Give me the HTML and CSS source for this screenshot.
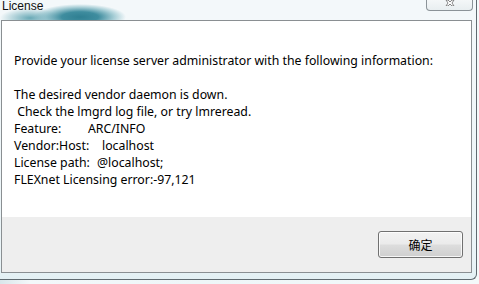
FILE: index.html
```html
<!DOCTYPE html>
<html>
<head>
<meta charset="utf-8">
<link rel="stylesheet" href="styles.css">
</head>
<body>
<div class="window">
  <div class="titlebar">
    <span class="title">License</span>
    <div class="close">
      <svg width="12" height="6" viewBox="0 0 12 6"><path d="M3 0 L5 2 L7 0 L9 0 L7 3 L9 6 L7 6 L5 4 L3 6 L1 6 L3 3 L1 0 Z" fill="#fff" stroke="#6a6a6a" stroke-width="0.8"/></svg>
    </div>
  </div>
  <div class="panel">
    <div class="content">
      <p class="line">Provide your license server administrator with the following information:</p>
      <p class="line blank">&nbsp;</p>
      <p class="line">The desired vendor daemon is down.</p>
      <p class="line">&nbsp;Check the lmgrd log file, or try lmreread.</p>
      <p class="line"><span class="lbl lbl-feature">Feature:</span>ARC/INFO</p>
      <p class="line"><span class="lbl lbl-vendor">Vendor:Host:</span>localhost</p>
      <p class="line"><span class="lbl lbl-path">License path:</span>@localhost;</p>
      <p class="line">FLEXnet Licensing error:-97,121</p>
    </div>
    <div class="footer">
      <button class="btn">确定</button>
    </div>
  </div>
</div>
</body>
</html>
```

FILE: styles.css
```css
html, body {
  margin: 0;
  padding: 0;
}
body {
  width: 479px;
  height: 284px;
  overflow: hidden;
  background: linear-gradient(90deg, #d9e6ea 0px, #f3f8fa 30px, #eef6f8 200px, #f4f9fa 479px);
  font-family: "Noto Sans", sans-serif;
}
.window {
  width: 476px;
  height: 279px;
  border-right: 1px solid #5f6a70;
  border-bottom: 1px solid #5f6a70;
  border-bottom-right-radius: 6px;
  background: linear-gradient(180deg, #f2f8fa 0px, #f3f8fa 20px, #eaf4f7 260px, #e3f0f4 279px);
  display: flex;
  flex-direction: column;
}
.titlebar {
  height: 20px;
  display: flex;
  justify-content: space-between;
  align-items: flex-start;
  background-color: #f3f8fa;
  background-image:
    radial-gradient(ellipse 46px 13px at 80px 17px, #2f7f92 0%, #3f8d9f 40%, rgba(120,180,192,0.6) 75%, rgba(243,248,250,0) 100%),
    radial-gradient(ellipse 30px 10px at 30px 18px, rgba(80,155,170,0.85) 0%, rgba(243,248,250,0) 100%);
}
.title {
  font-family: "Liberation Sans", Arial, sans-serif;
  font-size: 12px;
  line-height: 12px;
  color: #111;
  margin-left: 2px;
  margin-top: 0;
}
.close {
  width: 45px;
  height: 10px;
  margin-right: 3px;
  border: 1px solid #8b9398;
  border-top: none;
  border-radius: 0 0 4px 4px;
  background: linear-gradient(180deg, #f4f7f8, #e8eef0);
  display: flex;
  justify-content: center;
  align-items: flex-start;
}
.close svg {
  display: block;
  margin-left: 3px;
}
.panel {
  margin-left: 1px;
  width: 469px;
  height: 251px;
  border: 1px solid #8a8f92;
  display: flex;
  flex-direction: column;
}
.content {
  height: 196px;
  background: #ffffff;
  padding: 31px 0 0 12px;
  box-sizing: border-box;
}
.line {
  margin: 0;
  font-family: "Noto Sans", sans-serif;
  font-size: 12.3px;
  line-height: 17px;
  color: #000;
  white-space: pre;
}
.lbl {
  display: inline-block;
}
.lbl-feature { width: 74px; }
.lbl-vendor { width: 88px; }
.lbl-path { width: 83px; }
.footer {
  height: 55px;
  background: #eeeeee;
  display: flex;
  justify-content: flex-end;
  align-items: flex-start;
  padding: 14px 8px 0 0;
  box-sizing: border-box;
}
.btn {
  width: 85px;
  height: 27px;
  border: 1px solid #707070;
  border-radius: 3px;
  background: linear-gradient(180deg, #f2f2f2 0%, #ebebeb 48%, #dddddd 52%, #cfcfcf 100%);
  box-shadow: inset 0 0 0 1px rgba(255,255,255,0.8);
  font-family: "Noto Sans CJK SC", sans-serif;
  font-size: 12px;
  line-height: 14px;
  color: #000;
  padding: 0;
  margin: 0;
}
```
